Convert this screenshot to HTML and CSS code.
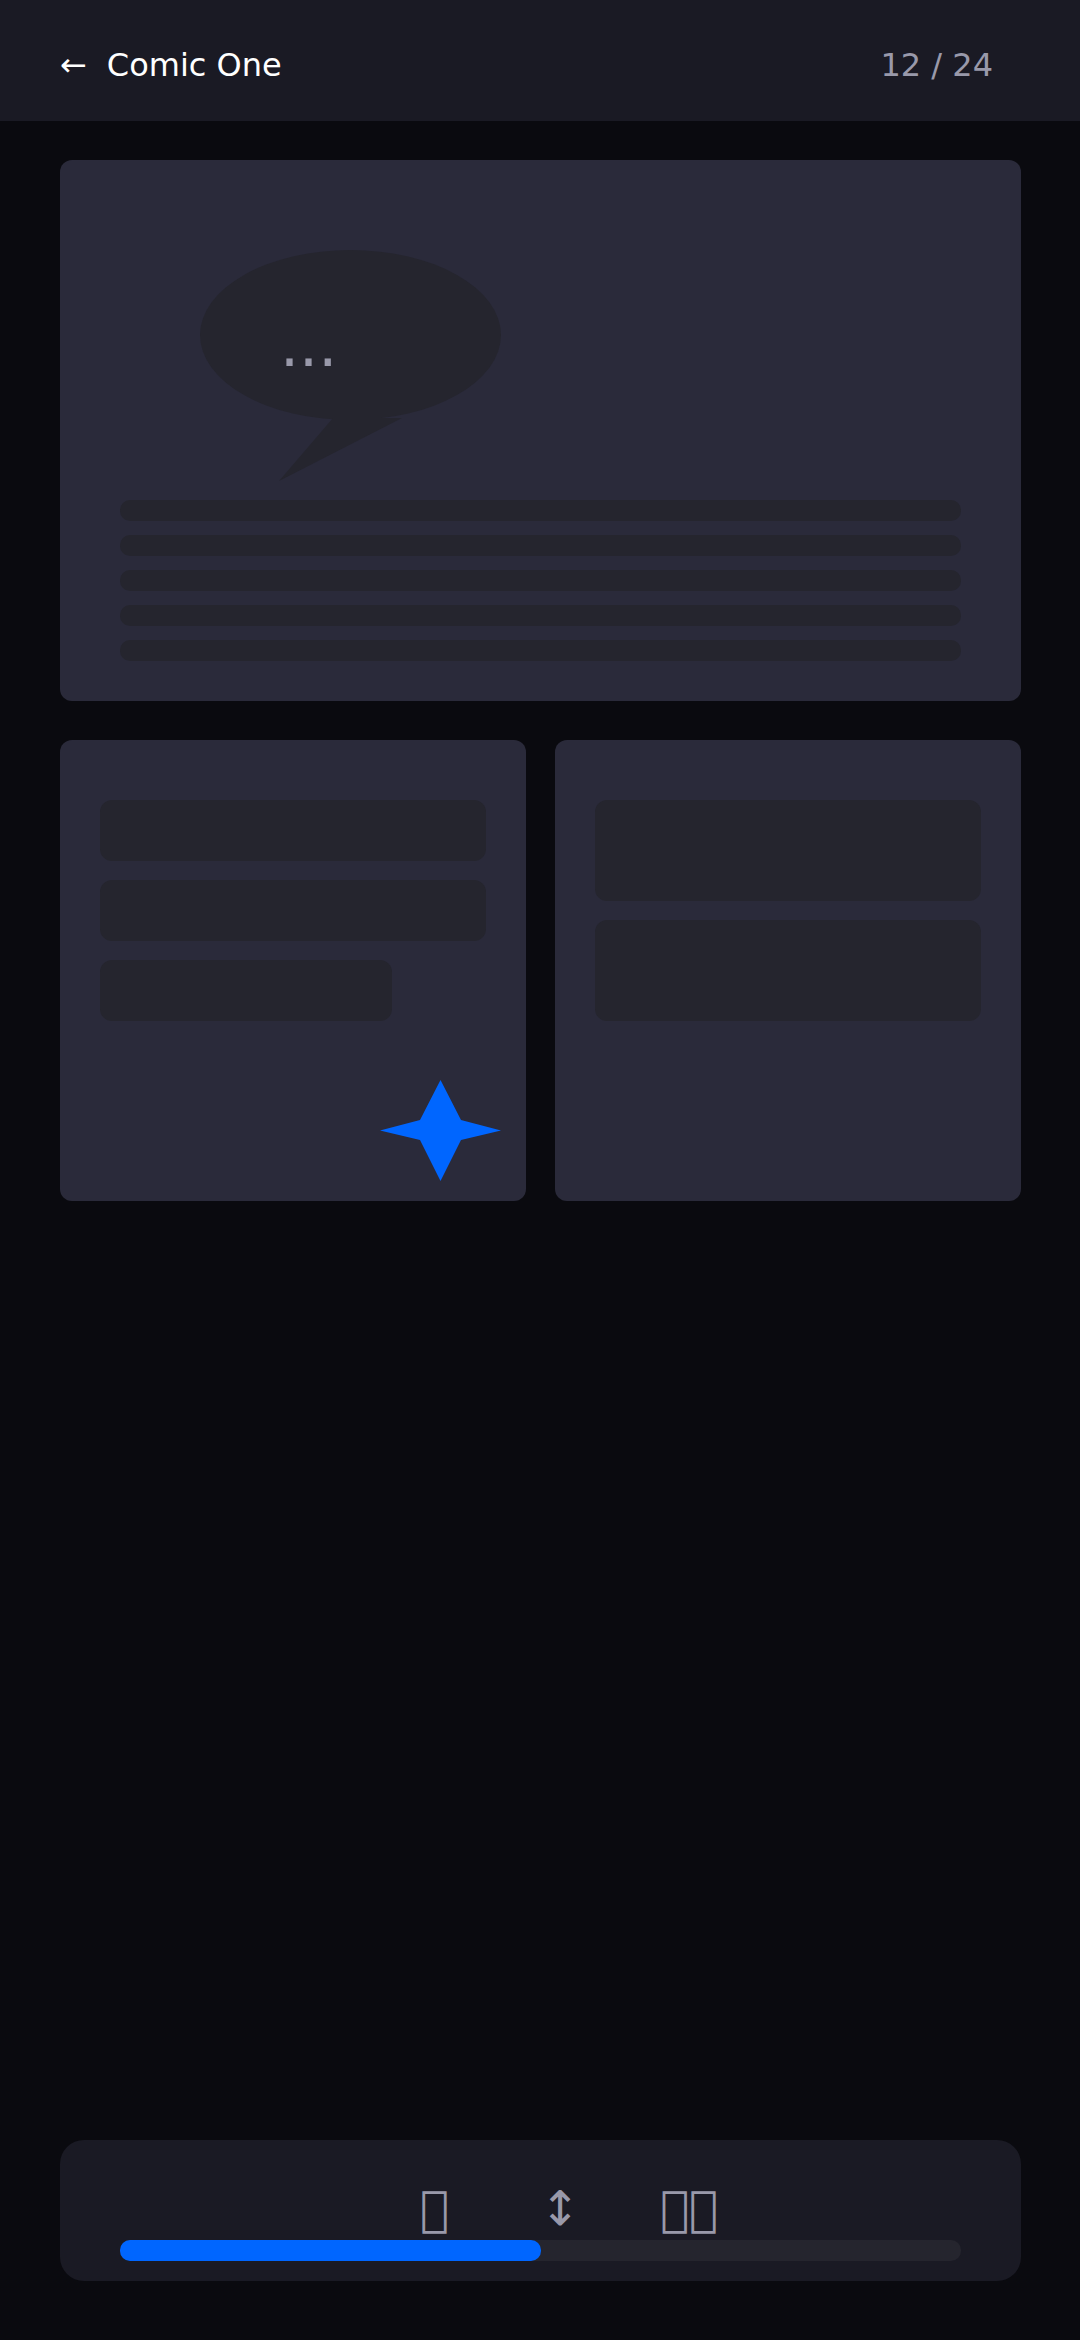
FILE: index.html
```html
<!DOCTYPE html>
<html>
<head>
  <title>Comic One</title>
  <link rel="stylesheet" href="styles.css">
</head>
<body>
  <header class="topbar">
    <div class="title"><span class="back">←</span><span>Comic One</span></div>
    <div class="count">12 / 24</div>
  </header>

  <main class="pages">
    <section class="panel panel-wide">
      <svg class="bubble" width="301" height="232" viewBox="0 0 301 232">
        <ellipse cx="150.5" cy="85" rx="150.5" ry="85"/>
        <polygon points="133,168 202,168 79,231"/>
        <text class="bubble-text" x="80" y="116">...</text>
      </svg>
      <div class="lines">
        <div class="line"></div>
        <div class="line"></div>
        <div class="line"></div>
        <div class="line"></div>
        <div class="line"></div>
      </div>
    </section>

    <div class="panel-row">
      <section class="panel panel-half">
        <div class="block"></div>
        <div class="block"></div>
        <div class="block block-short"></div>
        <svg class="star" width="121" height="101" viewBox="0 0 121 101">
          <polygon points="60.5,0 81,40 121,50.5 81,60 60.5,101 40,60 0,50.5 40,40"/>
        </svg>
      </section>
      <section class="panel panel-half">
        <div class="block block-tall"></div>
        <div class="block block-tall"></div>
      </section>
    </div>
  </main>

  <footer class="reader-bar">
    <div class="tools">
      <span>&#xE000;</span>
      <span>↕</span>
      <span>&#xE000;&#xE000;</span>
    </div>
    <div class="progress"><div class="progress-fill"></div></div>
  </footer>
</body>
</html>
```

FILE: styles.css
```css
* {
  box-sizing: border-box;
}

body {
  margin: 0;
  height: 2340px;
  background-color: #0a0a0f;
  font-family: "DejaVu Sans", sans-serif;
  display: flex;
  flex-direction: column;
}

.topbar {
  height: 121px;
  padding: 8px 60px 0;
  background-color: #1a1a24;
  display: flex;
  justify-content: space-between;
  align-items: center;
}

.title {
  display: flex;
  gap: 20px;
  color: white;
  font-size: 32px;
}

.count {
  color: #9999aa;
  font-size: 32px;
  margin-right: 27px;
}

.pages {
  flex: 1;
  padding: 39px 59px 0 60px;
  display: flex;
  flex-direction: column;
  gap: 39px;
}

.panel {
  background-color: #2a2a3a;
  border-radius: 12px;
}

.panel-wide {
  height: 541px;
  padding: 90px 60px 0;
}

.bubble {
  display: block;
  margin-left: 80px;
  margin-bottom: 18px;
  fill: #25252e;
}

.bubble-text {
  fill: #9999aa;
  font-size: 60px;
}

.lines {
  display: flex;
  flex-direction: column;
  gap: 14px;
}

.line {
  height: 21px;
  background-color: #25252e;
  border-radius: 10px;
}

.panel-row {
  display: flex;
  gap: 29px;
}

.panel-half {
  position: relative;
  flex: 1;
  height: 461px;
  padding: 60px 40px 0;
  display: flex;
  flex-direction: column;
  gap: 19px;
}

.block {
  height: 61px;
  background-color: #25252e;
  border-radius: 12px;
}

.block-short {
  width: 292px;
}

.block-tall {
  height: 101px;
}

.star {
  position: absolute;
  left: 320px;
  top: 340px;
  fill: #0066ff;
}

.reader-bar {
  height: 141px;
  margin: 0 59px 59px 60px;
  padding: 0 60px 20px;
  background-color: #1a1a24;
  border-radius: 24px;
  display: flex;
  flex-direction: column;
  justify-content: flex-end;
}

.tools {
  display: flex;
  gap: 80px;
  margin-bottom: 4px;
  padding-left: 300px;
  color: #9999aa;
  font-size: 48px;
  line-height: 56px;
}

.tools span {
  min-width: 40px;
}

.progress {
  height: 21px;
  background-color: #25252e;
  border-radius: 10px;
}

.progress-fill {
  width: 50%;
  height: 100%;
  background-color: #0066ff;
  border-radius: 10px;
}
```
